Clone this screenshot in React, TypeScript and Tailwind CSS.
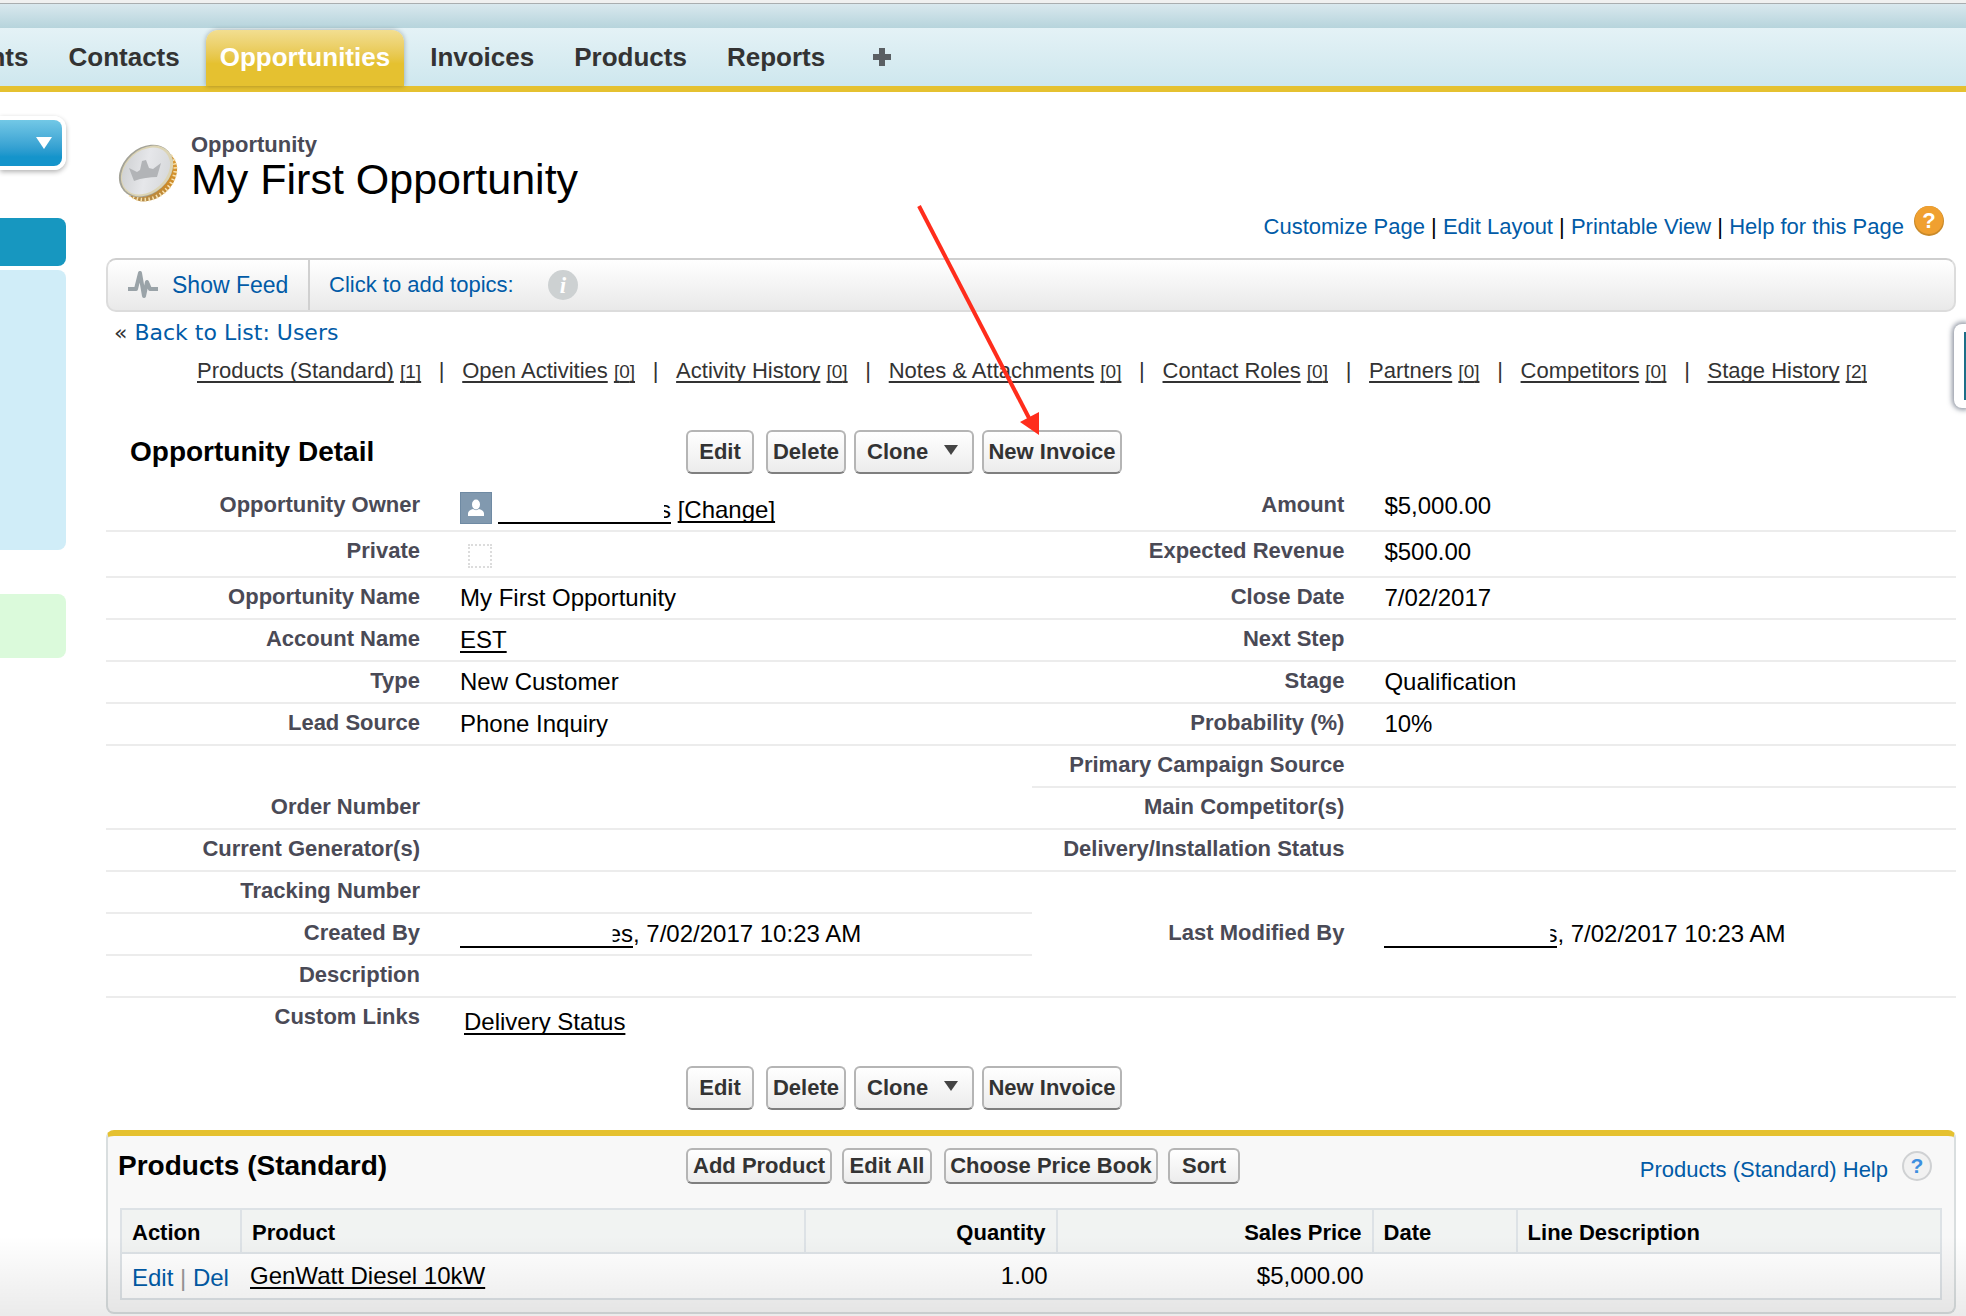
import type { ReactNode } from "react";

const tabs = ["Accounts", "Contacts", "Opportunities", "Invoices", "Products", "Reports"];

const pageLinks = ["Customize Page", "Edit Layout", "Printable View", "Help for this Page"];

const relatedLists = [
  { name: "Products (Standard)", count: 1 },
  { name: "Open Activities", count: 0 },
  { name: "Activity History", count: 0 },
  { name: "Notes & Attachments", count: 0 },
  { name: "Contact Roles", count: 0 },
  { name: "Partners", count: 0 },
  { name: "Competitors", count: 0 },
  { name: "Stage History", count: 2 },
];

const underlined = "underline decoration-2 underline-offset-[3px] [text-decoration-skip-ink:none]";

// user name with everything but its last letters blanked out
const HiddenName = ({ tail }: { tail: string }) => (
  <a href="#user" className="inline-block w-[173px] border-b-2 border-black text-right leading-6">
    <span className="inline-block [clip-path:inset(0_0_0_5px)]">{tail}</span>
  </a>
);

const OwnerValue = () => (
  <div className="flex items-start">
    <svg viewBox="0 0 32 32" className="mr-[6px] size-8 shrink-0">
      <rect width="32" height="32" fill="#8199af" />
      <rect x="0.5" y="0.5" width="31" height="31" fill="none" stroke="#6f8aa3" />
      <ellipse cx="16" cy="12.500" rx="4" ry="5" fill="#fff" />
      <path d="M8 24v-2.500c0-2.500 2-3.500 5-4.500 2 1.500 4 1.500 6 0 3 1 5 2 5 4.500V24z" fill="#fff" />
    </svg>
    <div className="pt-1">
      <HiddenName tail="s" />{" "}
      <a href="#change" className={underlined}>[Change]</a>
    </div>
  </div>
);

interface Field {
  label: string;
  value?: ReactNode;
  line?: boolean;
}

const rows: { left?: Field; right?: Field; tall?: boolean }[] = [
  { left: { label: "Opportunity Owner", value: <OwnerValue /> }, right: { label: "Amount", value: "$5,000.00" }, tall: true },
  {
    left: {
      label: "Private",
      value: (
        <input
          type="checkbox"
          aria-label="Private"
          disabled
          className="mt-[6px] ml-2 block size-6 appearance-none border-2 border-dotted border-[#dcdcdc]"
        />
      ),
    },
    right: { label: "Expected Revenue", value: "$500.00" },
    tall: true,
  },
  { left: { label: "Opportunity Name", value: "My First Opportunity" }, right: { label: "Close Date", value: "7/02/2017" } },
  {
    left: { label: "Account Name", value: <a href="#account" className={underlined}>EST</a> },
    right: { label: "Next Step" },
  },
  { left: { label: "Type", value: "New Customer" }, right: { label: "Stage", value: "Qualification" } },
  { left: { label: "Lead Source", value: "Phone Inquiry" }, right: { label: "Probability (%)", value: "10%" } },
  { right: { label: "Primary Campaign Source" } },
  { left: { label: "Order Number" }, right: { label: "Main Competitor(s)" } },
  { left: { label: "Current Generator(s)" }, right: { label: "Delivery/Installation Status" } },
  { left: { label: "Tracking Number" } },
  {
    left: { label: "Created By", value: <><HiddenName tail="es" />, 7/02/2017 10:23 AM</> },
    right: { label: "Last Modified By", value: <><HiddenName tail="s" />, 7/02/2017 10:23 AM</>, line: false },
  },
];

const Cells = ({ field }: { field?: Field }) => {
  if (!field) return <td colSpan={2} className="border-b-2 border-transparent" />;
  const line = field.line === false ? "border-transparent" : "border-[#ececec]";
  return (
    <>
      <th scope="row" className={`border-b-2 pt-[5px] pr-5 text-right text-[22px] leading-7 font-bold text-[#4a4a56] ${line}`}>
        {field.label}
      </th>
      <td className={`border-b-2 pt-[6px] pl-5 text-2xl leading-7 ${line}`}>{field.value}</td>
    </>
  );
};

const buttonBase =
  "rounded-md border-2 border-[#b5b5b5] border-b-[#7f7f7f] bg-linear-to-b from-white to-[#ececec] text-center text-[22px] leading-6 font-bold text-[#333]";

const DetailButtons = () => (
  <div className="flex">
    <button className={`${buttonBase} mr-3 h-11 w-[68px]`}>Edit</button>
    <button className={`${buttonBase} mr-2 h-11 w-20`}>Delete</button>
    <button className={`${buttonBase} mr-2 flex h-11 w-[120px] items-center gap-4 pl-[11px]`}>
      Clone
      <svg viewBox="0 0 14 10" className="mb-1 h-[10px] w-[14px]">
        <path d="M0 0h14L7 10z" fill="#444" />
      </svg>
    </button>
    <button className={`${buttonBase} h-11 w-[140px]`}>New Invoice</button>
  </div>
);

const CoinIcon = () => (
  <svg viewBox="0 0 60 58" className="h-[58px] w-[60px]">
    <defs>
      <linearGradient id="face" x1="0" y1="0" x2="1" y2="1">
        <stop offset="0" stopColor="#c8cacc" />
        <stop offset="0.5" stopColor="#e6e7ea" />
        <stop offset="1" stopColor="#d2d4d6" />
      </linearGradient>
      <linearGradient id="edge" x1="0" y1="1" x2="1" y2="0">
        <stop offset="0" stopColor="#a08a60" />
        <stop offset="0.35" stopColor="#cc8a28" />
        <stop offset="0.7" stopColor="#d99a35" />
        <stop offset="1" stopColor="#d8cfa8" />
      </linearGradient>
    </defs>
    <ellipse cx="33" cy="32" rx="29" ry="22" transform="rotate(-42 33 32)" fill="url(#edge)" />
    <ellipse cx="32" cy="31" rx="28" ry="22" transform="rotate(-42 32 31)" fill="none" stroke="#f7e2b0" strokeWidth="4" strokeDasharray="1.500 2.500" />
    <ellipse cx="28" cy="27" rx="30" ry="23" transform="rotate(-42 28 27)" fill="#a3a298" />
    <ellipse cx="29" cy="27" rx="29" ry="22" transform="rotate(-42 29 27)" fill="#dcd4b4" />
    <ellipse cx="28" cy="27" rx="27" ry="20" transform="rotate(-42 28 27)" fill="url(#face)" />
    <path d="M16 37 11 24l8 4 3-2 2-9 4-1 3 8 4 1 8-6-4 14c-7 0-15 1-23 4z" fill="#b2b4b7" />
  </svg>
);

const PulseIcon = () => (
  <svg viewBox="0 0 30 28" className="h-7 w-[30px]">
    <path d="M0 18h8l4-16 4 23 3-14 3 7h8" fill="none" stroke="#9aa3a8" strokeWidth="4" strokeLinejoin="round" />
  </svg>
);

const columns = [
  { name: "Action", className: "w-[120px]" },
  { name: "Product", className: "w-[31%]" },
  { name: "Quantity", className: "w-[252px] text-right" },
  { name: "Sales Price", className: "w-[316px] text-right" },
  { name: "Date", className: "w-[144px]" },
  { name: "Line Description", className: "" },
];

const Sidebar = () => (
  <aside className="w-[66px] shrink-0 pt-6">
    <button
      aria-label="Create new"
      className="flex h-[54px] w-full items-center justify-end rounded-r-xl border-4 border-l-0 border-white bg-linear-to-b from-[#72c8e6] to-[#1494cb] to-80% pr-[10px] shadow-[0_2px_5px_rgba(0,0,0,0.3)]"
    >
      <svg viewBox="0 0 16 12" className="h-3 w-4">
        <path d="M0 0h16L8 12z" fill="#fff" />
      </svg>
    </button>
    <div className="mt-12 h-12 rounded-r-lg bg-[#1797c0]" />
    <div className="mt-1 h-[280px] rounded-r-lg bg-[#d0edf8]" />
    <div className="mt-11 h-16 rounded-r-lg bg-[#dbfadb]" />
  </aside>
);

const ProductsPanel = () => (
  <section className="mt-5 rounded-lg border-2 border-t-[6px] border-[#d9dedf] border-t-[#e5c130] bg-[#f8f8f8] px-3 pb-3">
    <div className="flex h-[72px] items-start pt-3">
      <h2 className="-ml-[2px] w-[568px] text-[28px] leading-9 font-bold">Products (Standard)</h2>
      <div className="flex">
        <button className={`${buttonBase} mr-[10px] h-9 w-[146px]`}>Add Product</button>
        <button className={`${buttonBase} mr-3 h-9 w-[90px]`}>Edit All</button>
        <button className={`${buttonBase} mr-[10px] h-9 w-[214px]`}>Choose Price Book</button>
        <button className={`${buttonBase} h-9 w-[72px]`}>Sort</button>
      </div>
      <a href="#help" className="ml-auto flex items-start gap-[14px] pr-[10px] text-[22px] leading-7 text-[#015ba7]">
        <span className="pt-2">Products (Standard) Help</span>
        <svg viewBox="0 0 30 30" className="mt-[3px] size-[30px]">
          <circle cx="15" cy="15" r="14" fill="#f1f1f1" stroke="#cfd1d3" strokeWidth="2" />
          <text x="15" y="22" textAnchor="middle" fontSize="21" fontWeight="bold" fill="#3d8fe0">?</text>
        </svg>
      </a>
    </div>
    <table className="w-full table-fixed border-separate border-spacing-0 border-2 border-[#dde2e6] bg-white">
      <thead>
        <tr className="h-11 bg-[#f1f3f2] text-left text-[22px] leading-7">
          {columns.map((col) => (
            <th key={col.name} className={`border-r-2 border-b-2 border-[#dde2e6] px-[10px] pt-1 font-bold last:border-r-0 ${col.className}`}>
              {col.name}
            </th>
          ))}
        </tr>
      </thead>
      <tbody>
        <tr className="h-11 text-2xl leading-7">
          <td className="pt-1 pl-[10px] whitespace-nowrap text-[#015ba7]">
            <a href="#edit">Edit</a> <span className="text-[#999]">|</span> <a href="#del">Del</a>
          </td>
          <td className="pl-2">
            <a href="#product" className={underlined}>GenWatt Diesel 10kW</a>
          </td>
          <td className="pr-[10px] text-right">1.00</td>
          <td className="pr-[10px] text-right">$5,000.00</td>
          <td />
          <td />
        </tr>
      </tbody>
    </table>
  </section>
);

export default function App() {
  return (
    <div className="relative min-h-screen overflow-hidden bg-white font-['Liberation_Sans',Arial,sans-serif] text-black">
      <div className="h-1 border-b border-[#a9adaf] bg-[#f0f0f0]" />
      <div className="h-6 bg-linear-to-b from-[#d9e8ee] to-[#b6d4dc]" />
      <nav className="flex h-16 items-end gap-3 border-b-[6px] border-[#e5c130] bg-linear-to-b from-[#e4f2f6] to-[#cee7ee]">
        {tabs.map((tab) => (
          <a
            key={tab}
            href={`#${tab.toLowerCase()}`}
            className={`flex h-14 items-center px-[14px] pb-[2px] text-[26px] font-bold first:-ml-[104px] ${
              tab === "Opportunities"
                ? "rounded-t-xl bg-linear-to-b from-[#f2de90] to-[#e5c130] to-60% text-white shadow-[0_0_5px_rgba(0,0,0,0.3)]"
                : "text-[#333]"
            }`}
          >
            {tab}
          </a>
        ))}
        <a href="#all-tabs" aria-label="All tabs" className="ml-[22px] flex h-14 items-center pb-[2px]">
          <svg viewBox="0 0 18 18" className="size-[18px]">
            <path d="M6 0h6v6h6v6h-6v6H6v-6H0V6h6z" fill="#5a5f63" />
          </svg>
        </a>
      </nav>

      <div className="flex">
        <Sidebar />
        <main className="mr-[10px] ml-10 min-w-0 flex-1">
          <header className="flex h-[166px] items-start">
            <div className="mt-[52px] ml-3">
              <CoinIcon />
            </div>
            <div className="mt-[41px] ml-[13px]">
              <p className="text-[22px] leading-6 font-bold text-[#4a4a56]">Opportunity</p>
              <h1 className="text-[43px] leading-[44px]">My First Opportunity</h1>
            </div>
            <div className="mt-[114px] mr-3 ml-auto flex items-start text-[22px] leading-7">
              <div className="pt-[7px]">
                {pageLinks.map((link, i) => (
                  <span key={link}>
                    {i > 0 && " | "}
                    <a href="#page" className="text-[#015ba7]">{link}</a>
                  </span>
                ))}
              </div>
              <svg viewBox="0 0 30 30" className="ml-[10px] size-[30px]">
                <circle cx="15" cy="15" r="15" fill="#c98a2a" />
                <circle cx="15" cy="14" r="14" fill="#f0a030" />
                <text x="15" y="22" textAnchor="middle" fontSize="22" fontWeight="bold" fill="#fff">?</text>
              </svg>
            </div>
          </header>

          <div className="flex h-[54px] items-stretch rounded-[10px] border-2 border-[#dcdcdc] border-t-[#cfcfcf] bg-linear-to-b from-white to-[#e9e9e9] text-[22px] leading-7 text-[#015ba7]">
            <a href="#feed" className="flex w-[202px] items-center gap-[14px] border-r-2 border-[#d0d0d0] pl-5">
              <PulseIcon />
              <span className="text-[23px]">Show Feed</span>
            </a>
            <a href="#topics" className="ml-[19px] self-center">Click to add topics:</a>
            <svg viewBox="0 0 30 30" className="ml-[34px] size-[30px] self-center">
              <circle cx="15" cy="15" r="15" fill="#cdd1d2" />
              <text x="15" y="23" textAnchor="middle" fontSize="23" fontWeight="bold" fontStyle="italic" fontFamily="Liberation Serif, serif" fill="#fff">i</text>
            </svg>
          </div>

          <p className="mt-[7px] ml-2 font-['DejaVu_Sans',Verdana,sans-serif] text-[22px] leading-7 text-[#333]">
            « <a href="#list" className="text-[#015ba7]">Back to List: Users</a>
          </p>

          <div className="mt-[10px] mr-[89px] ml-[91px] flex justify-between text-[22px] leading-7 whitespace-nowrap text-[#333]">
            {relatedLists.map((list, i) => (
              <div key={list.name} className="contents">
                {i > 0 && <span>|</span>}
                <a href="#related">
                  <span className={underlined}>{list.name}</span>{" "}
                  <span className={`text-[19px] ${underlined}`}>[{list.count}]</span>
                </a>
              </div>
            ))}
          </div>

          <div className="mt-[44px] flex items-start">
            <h2 className="w-[580px] pl-6 text-[28px] leading-[44px] font-bold">Opportunity Detail</h2>
            <DetailButtons />
          </div>

          <table className="mt-3 w-full table-fixed border-separate border-spacing-0">
            <colgroup>
              <col className="w-[334px]" />
              <col className="w-[32%]" />
              <col className="w-[18%]" />
              <col className="w-[32%]" />
            </colgroup>
            <tbody className="align-top">
              {rows.map((row, i) => (
                <tr key={i} className={row.tall ? "h-[46px]" : "h-[42px]"}>
                  <Cells field={row.left} />
                  <Cells field={row.right} />
                </tr>
              ))}
              <tr className="h-[42px]">
                <th scope="row" className="border-b-2 border-[#ececec] pt-[5px] pr-5 text-right text-[22px] leading-7 font-bold text-[#4a4a56]">
                  Description
                </th>
                <td colSpan={3} className="border-b-2 border-[#ececec]" />
              </tr>
              <tr className="h-[68px]">
                <th scope="row" className="pt-[5px] pr-5 text-right text-[22px] leading-7 font-bold text-[#4a4a56]">
                  Custom Links
                </th>
                <td colSpan={3} className="pt-[10px] pl-6 text-2xl leading-7">
                  <a href="#delivery" className={underlined}>Delivery Status</a>
                </td>
              </tr>
            </tbody>
          </table>

          <div className="pl-[580px]">
            <DetailButtons />
          </div>

          <ProductsPanel />
        </main>
      </div>

      {/* collapsed side drawer */}
      <div className="absolute top-[324px] right-0 h-[84px] w-3 rounded-l-lg bg-white py-2 pl-[10px] shadow-[0_0_5px_2px_rgba(70,80,100,0.6)]">
        <div className="h-full bg-[#1d6f88]" />
      </div>

      {/* pointer to the New Invoice button */}
      <svg viewBox="0 0 124 232" className="pointer-events-none absolute top-[205px] left-[917px] h-[232px] w-[124px]">
        <path d="M2 1l110 212" stroke="#ff2d1c" strokeWidth="4" fill="none" />
        <path d="M122 230l-19-13 19-10z" fill="#ff2d1c" />
      </svg>

      <div className="pointer-events-none absolute inset-x-0 bottom-0 h-20 bg-linear-to-b from-transparent to-black/8" />
    </div>
  );
}
